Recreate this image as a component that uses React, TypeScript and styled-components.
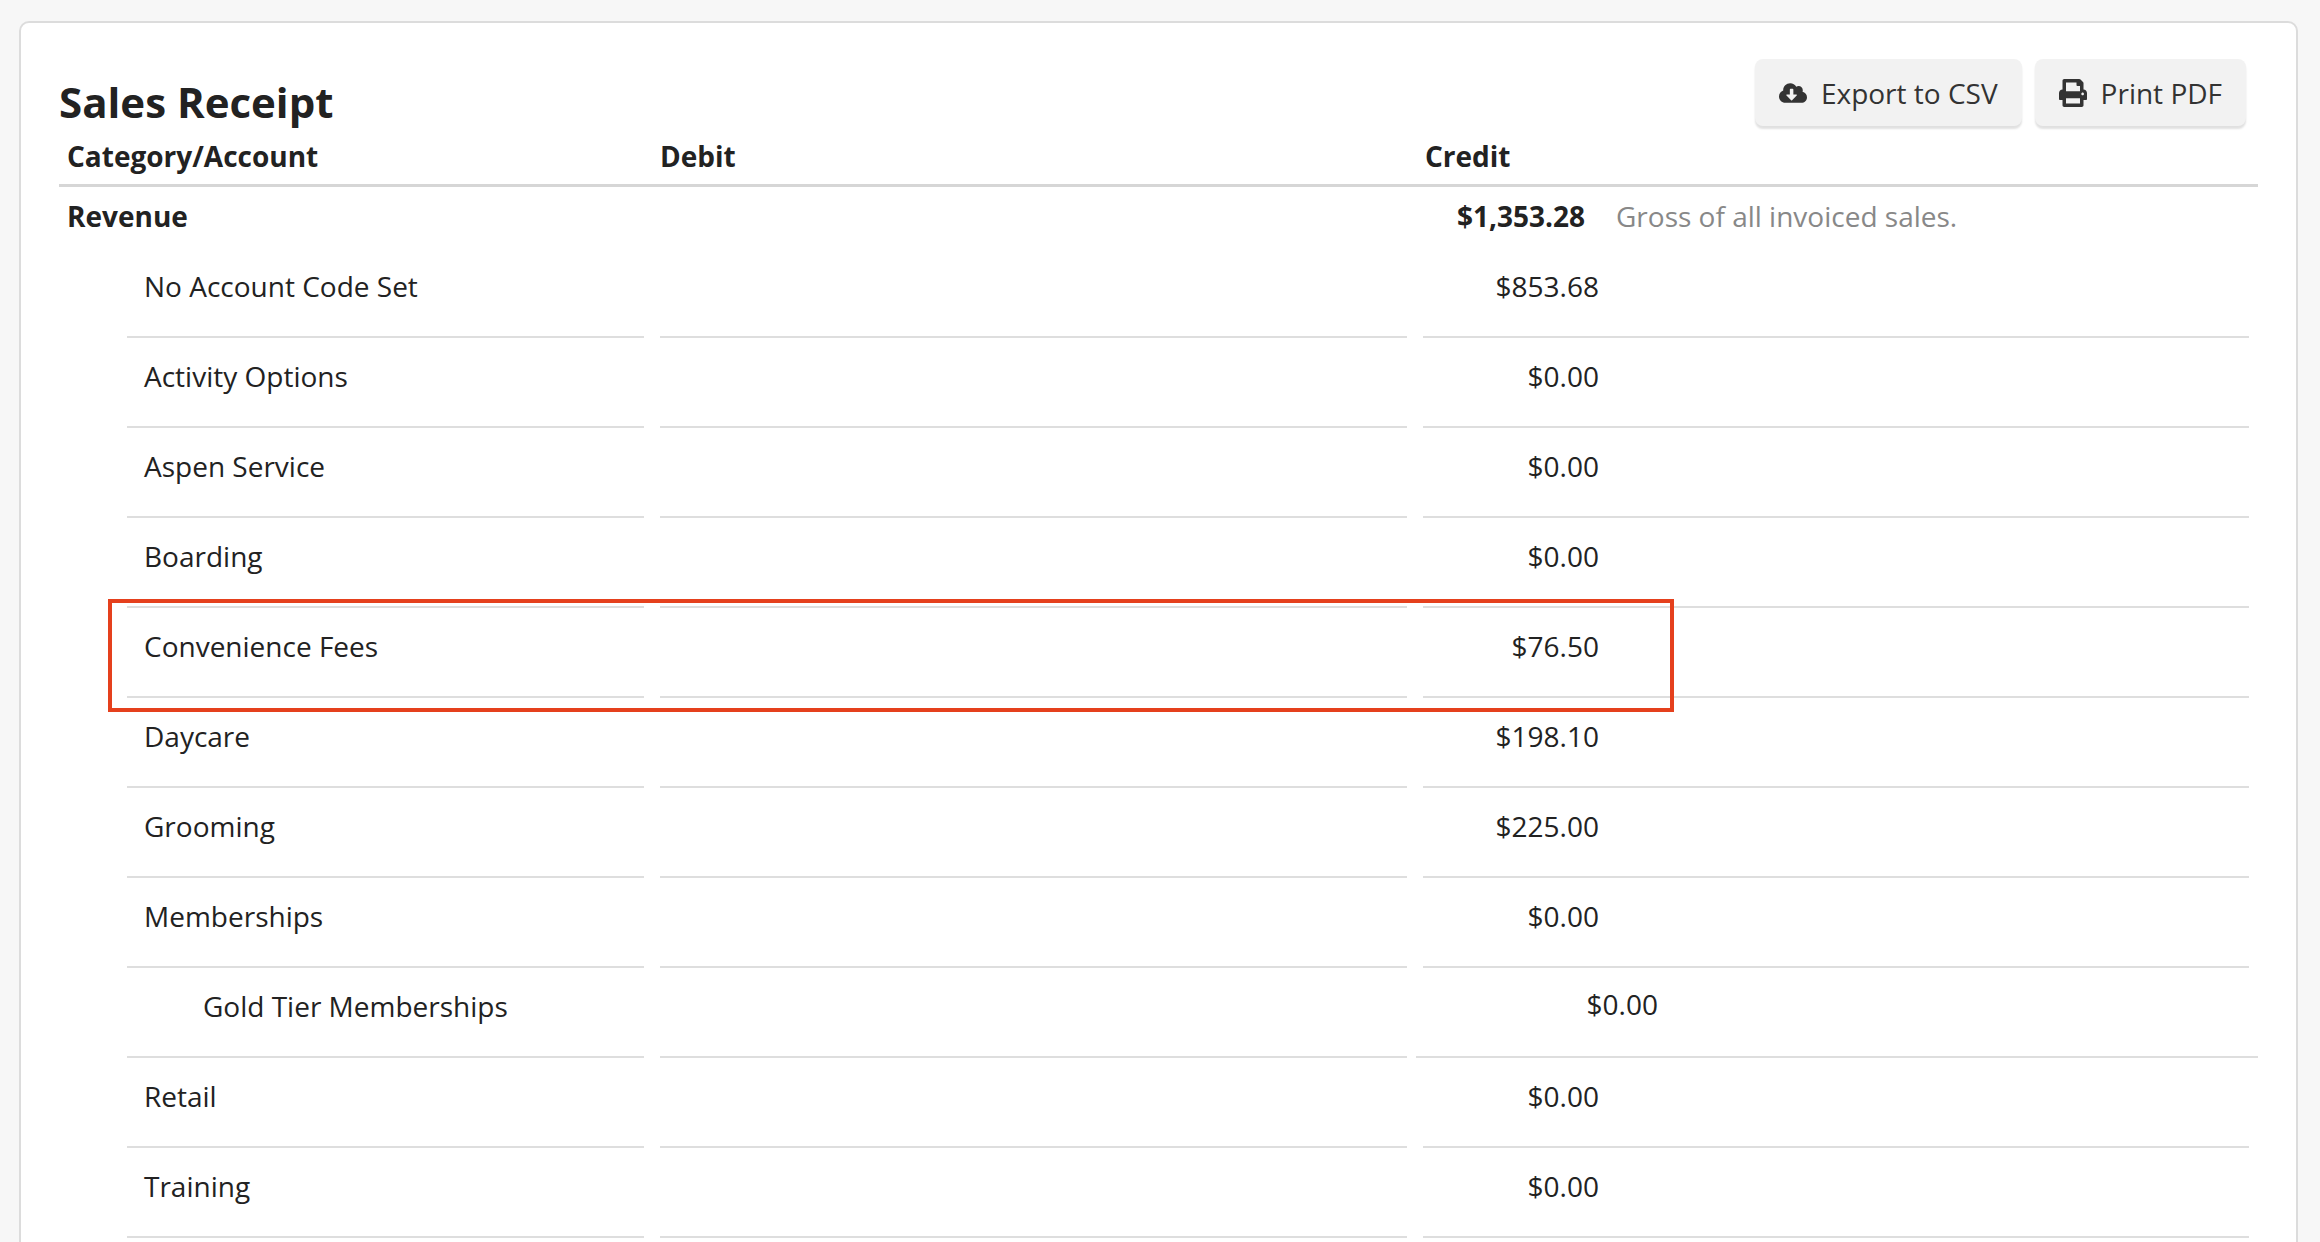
import React from 'react';
import styled, { createGlobalStyle } from 'styled-components';
import { FaCloudDownloadAlt, FaPrint } from 'react-icons/fa';

const GlobalStyle = createGlobalStyle`
  body {
    margin: 0;
    background: #f7f7f7;
    font-family: 'Open Sans', 'Noto Sans', sans-serif;
    color: #222;
  }
`;

const Card = styled.div`
  position: relative;
  margin: 21px 22px 0 19px;
  background: #fff;
  border: 2px solid #dcdcdc;
  border-radius: 10px;
  padding: 36px 38px 80px 38px;
`;

const TitleRow = styled.div`
  display: flex;
  justify-content: space-between;
  align-items: flex-start;
  height: 71px;
`;

const Title = styled.h1`
  margin: 18px 0 0 0;
  font-size: 42px;
  line-height: 50px;
  font-weight: 700;
  color: #222;
`;

const Actions = styled.div`
  display: flex;
  gap: 13px;
  margin-right: 12px;
`;

const ActionButton = styled.button`
  display: flex;
  align-items: center;
  gap: 14px;
  height: 67px;
  padding: 0 24px;
  border: none;
  border-radius: 8px;
  background: #f2f2f2;
  box-shadow: 0 3px 2px rgba(0, 0, 0, 0.12);
  font-family: inherit;
  font-size: 28px;
  color: #333;
  svg { width: 28px; height: 28px; }
`;

const HeaderRow = styled.div`
  display: grid;
  grid-template-columns: 601px 765px 1fr;
  border-bottom: 3px solid #d6d6d6;
  font-size: 28px;
  font-weight: 700;
  line-height: 38px;
  padding: 7px 0 9px;
  & > div:first-child { padding-left: 8px; }
`;

const SectionRow = styled.div`
  display: grid;
  grid-template-columns: 1366px 1fr;
  align-items: start;
  box-sizing: border-box;
  height: 61px;
  padding-top: 10px;
  font-size: 28px;
  line-height: 38px;
  & > div:first-child { padding-left: 8px; font-weight: 700; }
`;

const TotalCell = styled.div`
  display: flex;
  align-items: center;
`;

const Total = styled.span`
  width: 160px;
  text-align: right;
  font-weight: 700;
`;

const Note = styled.span`
  margin-left: 31px;
  color: #888;
`;

const SubRow = styled.div`
  display: grid;
  grid-template-columns: 517px 747px 826px;
  column-gap: 16px;
  padding-left: 68px;
  font-size: 28px;
  line-height: 38px;
`;

const Cell = styled.div<{ $pad?: number; $nested?: boolean }>`
  height: 90px;
  box-sizing: border-box;
  padding-top: 19px;
  padding-left: ${({ $pad }) => $pad ?? 0}px;
  border-bottom: 2px solid #dedede;
  ${({ $nested }) => ($nested ? 'margin-left: -7px; margin-right: -9px; padding-top: 17px;' : '')}
`;

const Amount = styled.span<{ $wide?: boolean }>`
  display: inline-block;
  width: ${({ $wide }) => ($wide ? 242 : 176)}px;
  text-align: right;
`;

const Highlight = styled.div`
  position: absolute;
  left: 87px;
  top: 576px;
  width: 1566px;
  height: 113px;
  border: 4px solid #e5401d;
  box-sizing: border-box;
  pointer-events: none;
`;

const rows: { name: string; amount: string; nested?: boolean }[] = [
  { name: 'No Account Code Set', amount: '$853.68' },
  { name: 'Activity Options', amount: '$0.00' },
  { name: 'Aspen Service', amount: '$0.00' },
  { name: 'Boarding', amount: '$0.00' },
  { name: 'Convenience Fees', amount: '$76.50' },
  { name: 'Daycare', amount: '$198.10' },
  { name: 'Grooming', amount: '$225.00' },
  { name: 'Memberships', amount: '$0.00' },
  { name: 'Gold Tier Memberships', amount: '$0.00', nested: true },
  { name: 'Retail', amount: '$0.00' },
  { name: 'Training', amount: '$0.00' },
];

export default function App() {
  return (
    <>
      <GlobalStyle />
      <Card>
        <TitleRow>
          <Title>Sales Receipt</Title>
          <Actions>
            <ActionButton><FaCloudDownloadAlt />Export to CSV</ActionButton>
            <ActionButton><FaPrint />Print PDF</ActionButton>
          </Actions>
        </TitleRow>
        <HeaderRow>
          <div>Category/Account</div>
          <div>Debit</div>
          <div>Credit</div>
        </HeaderRow>
        <SectionRow>
          <div>Revenue</div>
          <TotalCell>
            <Total>$1,353.28</Total>
            <Note>Gross of all invoiced sales.</Note>
          </TotalCell>
        </SectionRow>
        {rows.map((r) => (
          <SubRow key={r.name}>
            <Cell $pad={r.nested ? 76 : 17}>{r.name}</Cell>
            <Cell />
            <Cell $nested={r.nested}>
              <Amount $wide={r.nested}>{r.amount}</Amount>
            </Cell>
          </SubRow>
        ))}
        <Highlight />
      </Card>
    </>
  );
}
